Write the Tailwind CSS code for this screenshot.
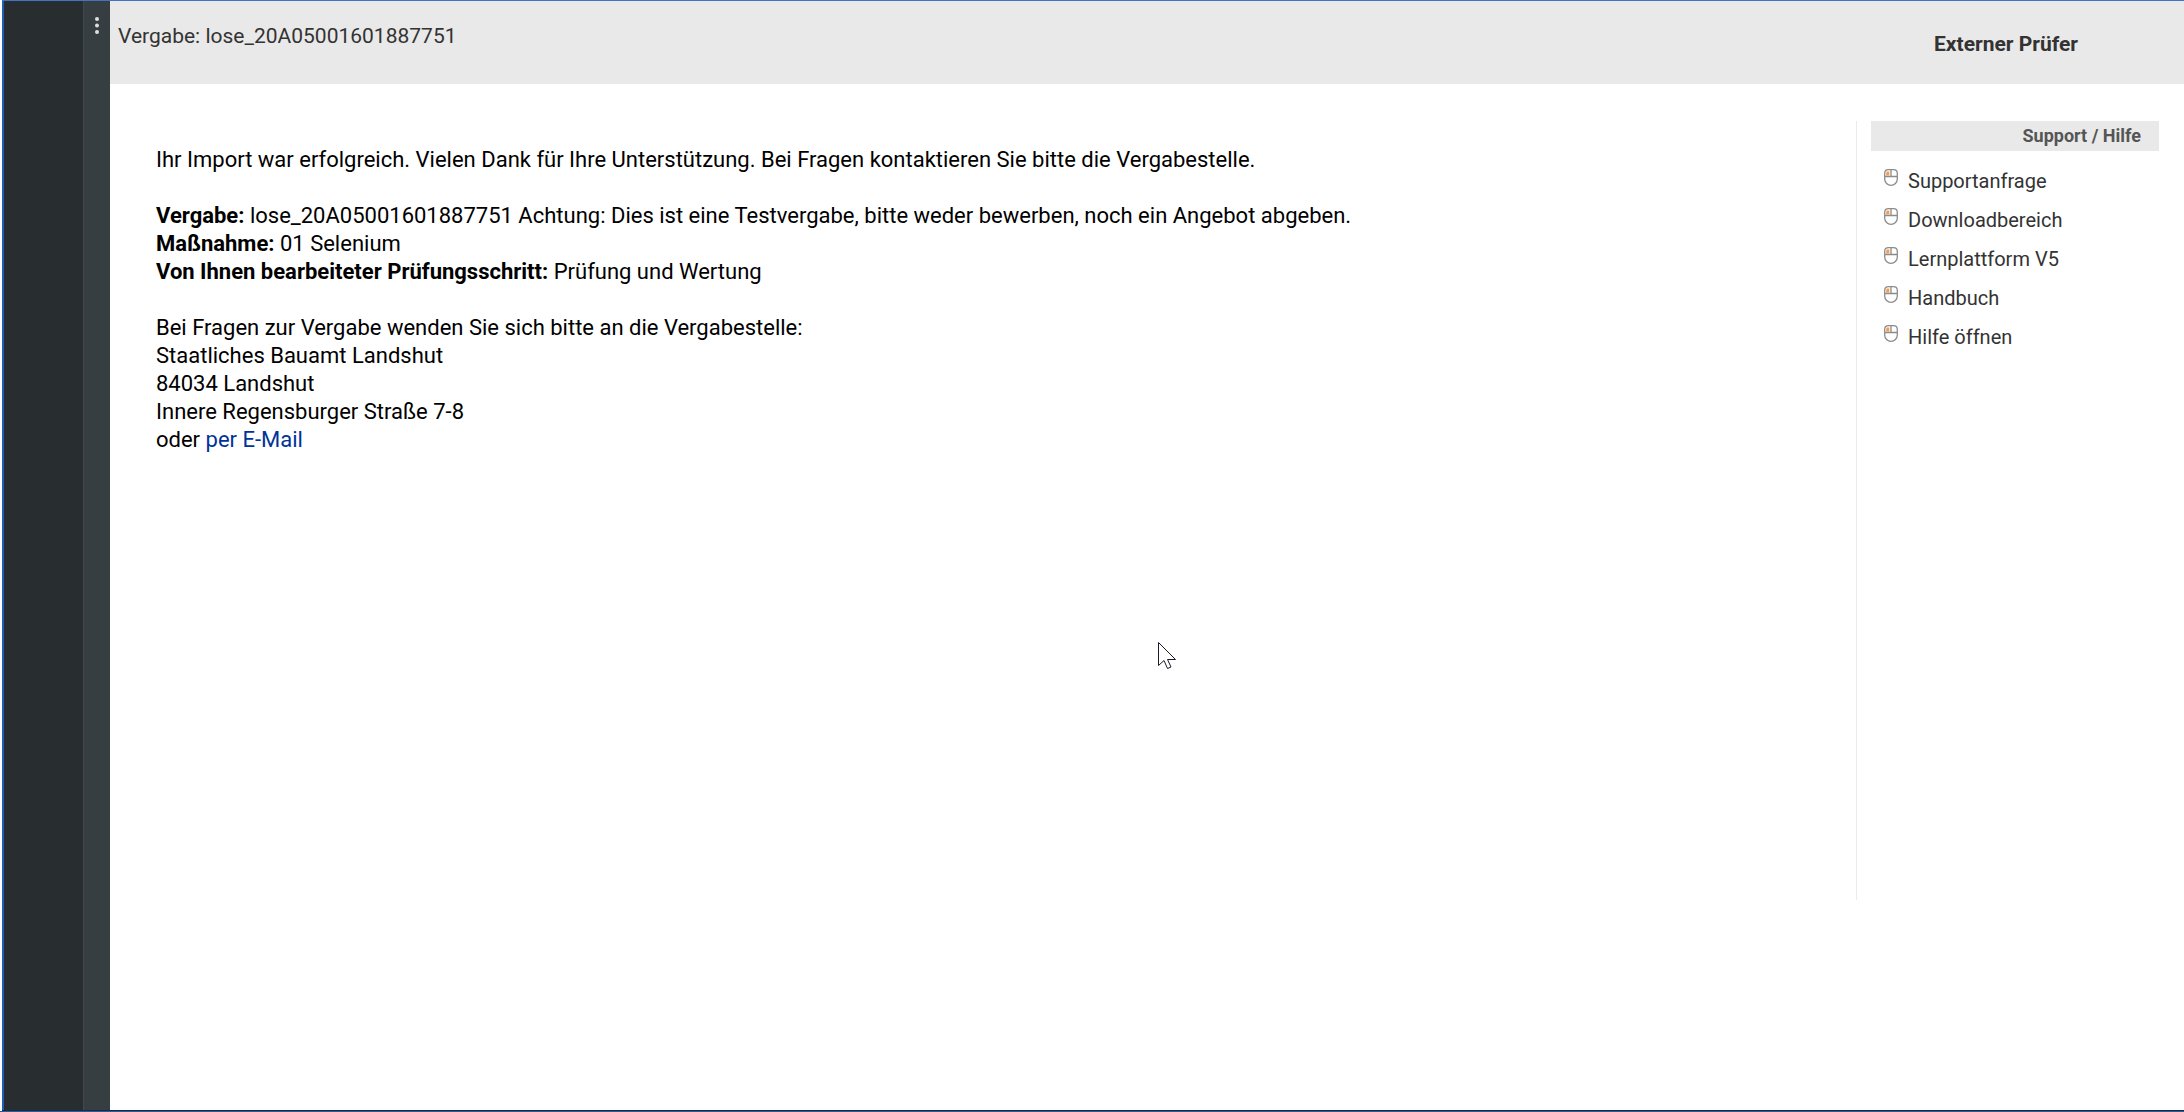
<!DOCTYPE html>
<html lang="de">
<head>
<meta charset="utf-8">
<title>Externer Prüfer</title>
<script src="https://cdn.jsdelivr.net/npm/@tailwindcss/browser@4"></script>
</head>
<body class="bg-white font-['Roboto',sans-serif] text-black">
<svg class="hidden" aria-hidden="true">
  <symbol id="mouse" viewBox="0 0 14 17">
    <path d="M2.500 2.500h2.800v4H2z" fill="#fb9a4b"/>
    <path d="M.700 4.500Q.700 .700 4.500 .700h5Q13.300 .700 13.300 4.500V10a6.300 6.300 0 0 1-12.600 0zM1 7.500h12M7 1v6.500" fill="none" stroke="#8c8c8c" stroke-width="1.300"/>
  </symbol>
</svg>
<div class="flex min-h-screen flex-col border-b border-[#1d5fae] pl-0.5">
  <div class="flex grow border-b border-t border-b-[#26282c] border-t-[#4472c4]">
    <nav class="w-[81px] shrink-0 border-l-2 border-[#1f5fb5] bg-[#282d2f]" aria-label="Navigation"></nav>
    <div class="flex w-[27px] shrink-0 items-start justify-center border-l border-[#41474a] bg-[#373e41] pt-4">
      <button class="flex w-4 justify-center" aria-label="Menü">
        <svg class="h-[18px] w-1" viewBox="0 0 4 18" fill="#dedede"><circle cx="2" cy="2" r="2"/><circle cx="2" cy="8.500" r="2"/><circle cx="2" cy="15" r="2"/></svg>
      </button>
    </div>
    <div class="flex min-w-0 grow flex-col">
      <header class="flex h-[83px] items-start justify-between bg-[#e9e9e9] pl-2 pr-[106px] text-[#333]">
        <h1 class="pt-[21px] text-[21px] leading-[28px]">Vergabe: lose_20A05001601887751</h1>
        <div class="pt-[29px] text-[21px] leading-[28px] font-bold">Externer Prüfer</div>
      </header>
      <div class="flex grow items-start pt-[37px] pr-[25px]">
        <main class="grow pl-[46px] pt-[25px] text-[22px] leading-[28px]">
          <p>Ihr Import war erfolgreich. Vielen Dank für Ihre Unterstützung. Bei Fragen kontaktieren Sie bitte die Vergabestelle.</p>
          <p class="mt-7"><b>Vergabe:</b> lose_20A05001601887751 Achtung: Dies ist eine Testvergabe, bitte weder bewerben, noch ein Angebot abgeben.</p>
          <p><b>Maßnahme:</b> 01 Selenium</p>
          <p><b>Von Ihnen bearbeiteter Prüfungsschritt:</b> Prüfung und Wertung</p>
          <address class="mt-7 not-italic">Bei Fragen zur Vergabe wenden Sie sich bitte an die Vergabestelle:<br>Staatliches Bauamt Landshut<br>84034 Landshut<br>Innere Regensburger Straße 7-8<br>oder <a href="#" class="text-[#003399]">per E-Mail</a></address>
        </main>
        <aside class="min-h-[779px] w-[303px] shrink-0 border-l border-[#ebebeb] pl-3.5">
          <h2 class="bg-[#e9e9e9] pr-[18px] text-right text-[18px] leading-[30px] font-bold text-[#555]">Support / Hilfe</h2>
          <ul class="pt-[11px] pl-[13px] text-[20px] leading-[39px] text-[#333]">
            <li><a href="#" class="flex gap-2.5"><svg class="mt-[7px] h-[17px] w-3.5"><use href="#mouse"/></svg>Supportanfrage</a></li>
            <li><a href="#" class="flex gap-2.5"><svg class="mt-[7px] h-[17px] w-3.5"><use href="#mouse"/></svg>Downloadbereich</a></li>
            <li><a href="#" class="flex gap-2.5"><svg class="mt-[7px] h-[17px] w-3.5"><use href="#mouse"/></svg>Lernplattform V5</a></li>
            <li><a href="#" class="flex gap-2.5"><svg class="mt-[7px] h-[17px] w-3.5"><use href="#mouse"/></svg>Handbuch</a></li>
            <li><a href="#" class="flex gap-2.5"><svg class="mt-[7px] h-[17px] w-3.5"><use href="#mouse"/></svg>Hilfe öffnen</a></li>
          </ul>
        </aside>
      </div>
    </div>
  </div>
</div>
<svg class="absolute left-[1158px] top-[641px] h-7 w-[19px]" viewBox="0 0 19 28" fill="#fff" stroke="#1a1a2a" aria-hidden="true"><path d="M.500 1.500v23l5.500-5 3.500 8 3.500-1.500-3.500-7.500h8z"/></svg>
</body>
</html>
